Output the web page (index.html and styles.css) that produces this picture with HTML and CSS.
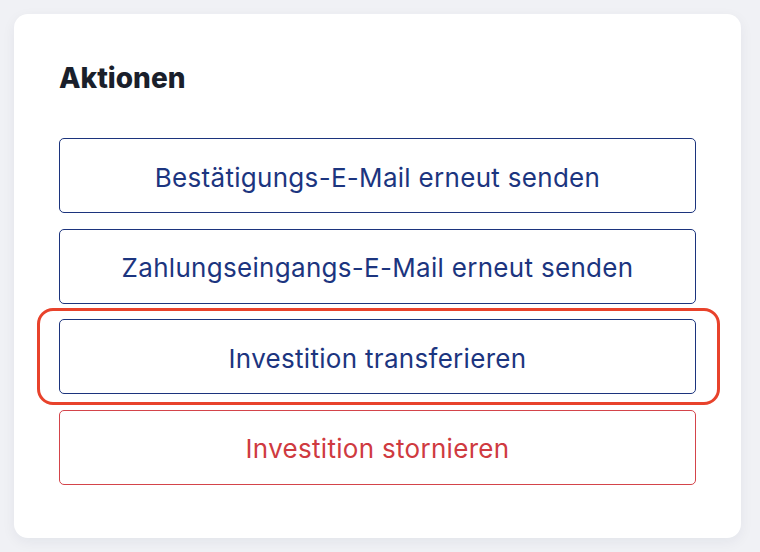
FILE: index.html
```html
<!DOCTYPE html>
<html lang="de">
<head>
  <meta charset="UTF-8" />
  <meta name="viewport" content="width=device-width, initial-scale=1.0" />
  <title>Aktionen</title>
  <link rel="stylesheet" href="styles.css">
</head>
<body>
  <div class="actions-card">
    <h2>Aktionen</h2>

    <div class="action-list">
      <button class="action-btn">Bestätigungs-E-Mail erneut senden</button>
      <button class="action-btn">Zahlungseingangs-E-Mail erneut senden</button>
      <div class="highlighted">
        <button class="action-btn">Investition transferieren</button>
        <span class="highlight-ring"></span>
      </div>
      <button class="action-btn danger">Investition stornieren</button>
    </div>
  </div>
</body>
</html>
```

FILE: styles.css
```css
* {
  margin: 0;
  padding: 0;
  box-sizing: border-box;
}

body {
  font-family: 'Inter', 'Liberation Sans', sans-serif;
  background-color: #f0f1f5;
  padding: 14px 19px 14px 14px;
}

.actions-card {
  background-color: white;
  border-radius: 14px;
  box-shadow: 0 4px 14px rgba(20, 30, 60, 0.06);
  padding: 47px 45px 53px;
  height: 524px;
}

.actions-card h2 {
  font-size: 28px;
  font-weight: 800;
  color: #1a1f2b;
  line-height: 34px;
  margin-bottom: 43px;
}

.action-list {
  display: flex;
  flex-direction: column;
  gap: 15.6px;
}

.action-btn {
  width: 100%;
  height: 75px;
  padding-top: 3px;
  background: white;
  border: 1px solid #1c347d;
  border-radius: 5px;
  color: #1c357f;
  font-family: inherit;
  font-size: 26px;
  letter-spacing: 0.3px;
  cursor: pointer;
}

.action-btn.danger {
  border-color: #d4444a;
  color: #cf3a40;
}

.highlighted {
  position: relative;
}

.highlight-ring {
  position: absolute;
  top: -11px;
  bottom: -11px;
  left: -22px;
  right: -24px;
  border: 3px solid #e8422b;
  border-radius: 16px;
  pointer-events: none;
}
```
